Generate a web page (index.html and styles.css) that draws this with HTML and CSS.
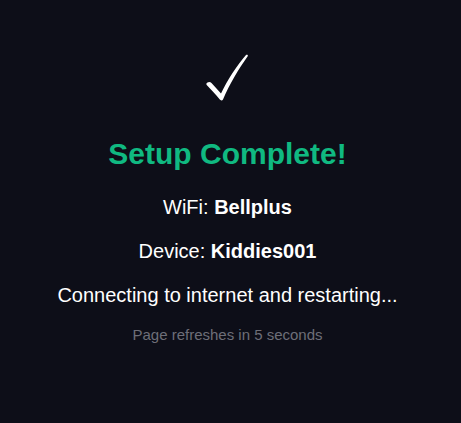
FILE: index.html
```html
<!DOCTYPE html>
<html lang="en">
<head>
<meta charset="utf-8">
<title>Setup Complete</title>
<link rel="stylesheet" href="styles.css">
</head>
<body>
<main class="page">
  <svg class="check" viewBox="1.5 0 52 52" width="52" height="52" aria-hidden="true">
    <path d="M7,32.5 C8.5,31.5 10,32 11,33 L20.5,43.5 C27,30 36,16 45.5,5 C46.5,4.5 47.8,5 47.2,6.2 C38,19 29,34 22.5,49.5 C22,50.7 20,50.7 19.3,49.6 C15,44 10,39 6.2,35 C5.5,34 6,33 7,32.5 Z" fill="#ffffff"/>
  </svg>
  <h1 class="title">Setup Complete!</h1>
  <p class="info info-wifi">WiFi: <strong>Bellplus</strong></p>
  <p class="info info-device">Device: <strong>Kiddies001</strong></p>
  <p class="status">Connecting to internet and restarting...</p>
  <p class="note">Page refreshes in 5 seconds</p>
</main>
</body>
</html>
```
FILE: styles.css
```css
html, body {
  margin: 0;
  padding: 0;
  background: #0d0e18;
  height: 100%;
}

body {
  font-family: "Liberation Sans", Arial, sans-serif;
  color: #ffffff;
}

.page {
  display: flex;
  flex-direction: column;
  align-items: center;
  text-align: center;
  padding: 50px 6px 0 0;
}

.check {
  display: block;
}

.title {
  margin: 34px 0 0;
  font-size: 30px;
  line-height: 36px;
  font-weight: 700;
  color: #10b981;
}

.info {
  margin: 0;
  font-size: 20px;
  line-height: 24px;
}

.info-wifi {
  margin-top: 23px;
}

.info-device {
  margin-top: 20px;
}

.info strong {
  font-weight: 700;
}

.status {
  margin: 20px 0 0;
  font-size: 20px;
  line-height: 24px;
}

.note {
  margin: 19px 0 0;
  font-size: 15px;
  line-height: 18px;
  color: #6e6e78;
}
```
